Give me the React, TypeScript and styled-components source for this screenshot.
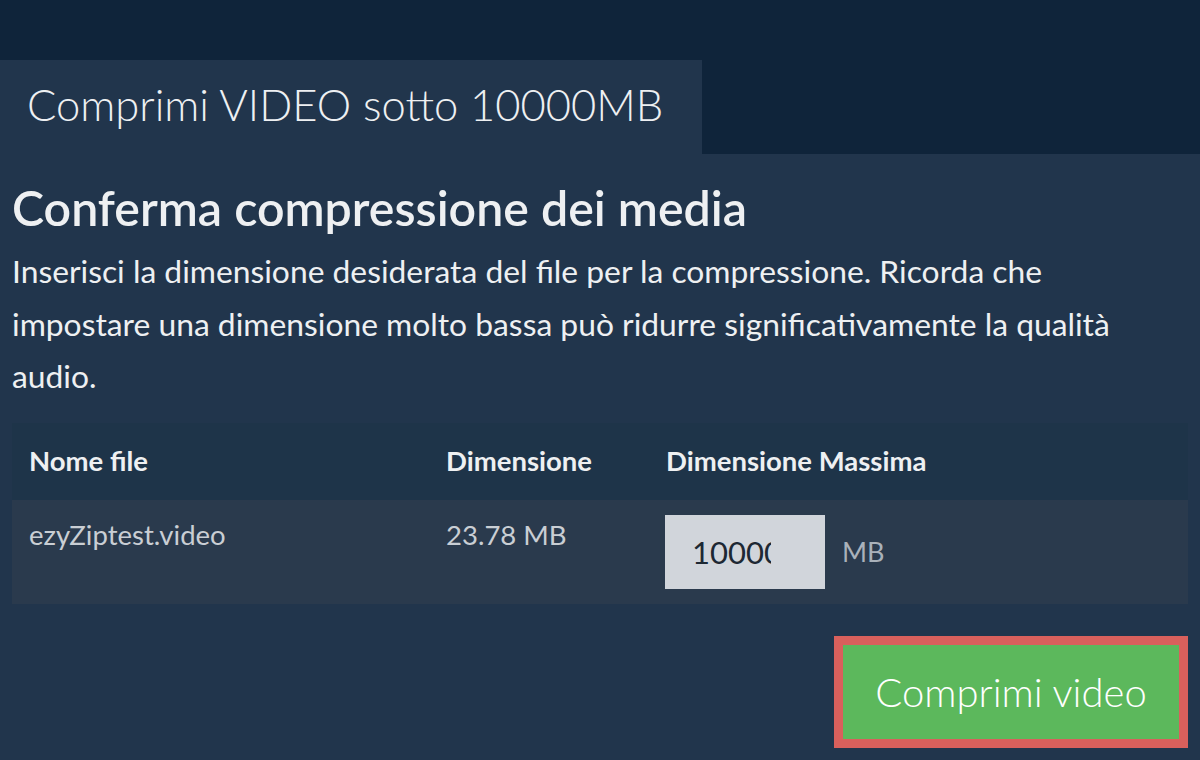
import React from "react";
import styled, { createGlobalStyle } from "styled-components";

const GlobalStyle = createGlobalStyle`
  html, body {
    margin: 0;
    padding: 0;
    background: #21354c;
    font-family: Lato, "Open Sans", sans-serif;
    color: #eef0f2;
  }
`;

const TopBar = styled.header`
  background: #0f243a;
  padding-top: 60px;
  display: flex;
`;

const Tab = styled.div`
  width: 702px;
  height: 94px;
  box-sizing: border-box;
  background: #21354c;
  padding-left: 27px;
  display: flex;
  align-items: center;
  padding-bottom: 6px;
  font-size: 43.5px;
  font-weight: 300;
  color: #eef0f2;
`;

const Content = styled.main`
  padding: 26px 12px 0;
`;

const Heading = styled.h2`
  margin: 0;
  font-size: 48.3px;
  line-height: 54px;
  font-weight: 600;
`;

const Intro = styled.p`
  margin: 11px 0 0;
  max-width: 1130px;
  font-size: 31.8px;
  line-height: 52.5px;
  color: #eef0f2;
`;

const Table = styled.div`
  margin-top: 20px;
  display: grid;
  grid-template-columns: 417px 220px 1fr;
`;

const HeadCell = styled.div`
  background: #1e3449;
  height: 75px;
  display: flex;
  align-items: center;
  padding: 0 17px 2px;
  font-size: 27.5px;
  font-weight: 700;
  color: #eef0f2;
`;

const Cell = styled.div<{ $center?: boolean }>`
  background: #2a3a4d;
  height: 104px;
  box-sizing: border-box;
  padding: ${(p) => (p.$center ? "0 16px" : "18px 17px 0")};
  display: flex;
  align-items: ${(p) => (p.$center ? "center" : "flex-start")};
  font-size: 27.5px;
  color: #c9ced4;
`;

const SizeInput = styled.input`
  width: 160px;
  height: 74px;
  box-sizing: border-box;
  border: none;
  outline: none;
  background: #d1d5db;
  padding: 0 54px 0 27px;
  font-family: Lato, sans-serif;
  font-size: 31px;
  color: #1d2833;
`;

const Unit = styled.span`
  margin-left: 17px;
  font-size: 27px;
  color: #a9b1ba;
`;

const Actions = styled.div`
  display: flex;
  justify-content: flex-end;
  margin-top: 32px;
`;

const CompressButton = styled.button`
  width: 354px;
  height: 112px;
  box-sizing: border-box;
  border: 9px solid #d9605c;
  background: #5cb85c;
  color: #ffffff;
  font-family: Lato, sans-serif;
  font-size: 40px;
  font-weight: 300;
  cursor: pointer;
`;

export default function App() {
  return (
    <>
      <GlobalStyle />
      <TopBar>
        <Tab>Comprimi VIDEO sotto 10000MB</Tab>
      </TopBar>
      <Content>
        <Heading>Conferma compressione dei media</Heading>
        <Intro>
          Inserisci la dimensione desiderata del file per la compressione. Ricorda che
          impostare una dimensione molto bassa può ridurre significativamente la qualità
          audio.
        </Intro>
        <Table>
          <HeadCell>Nome file</HeadCell>
          <HeadCell>Dimensione</HeadCell>
          <HeadCell>Dimensione Massima</HeadCell>
          <Cell>ezyZiptest.video</Cell>
          <Cell>23.78 MB</Cell>
          <Cell $center>
            <SizeInput type="text" defaultValue="10000" />
            <Unit>MB</Unit>
          </Cell>
        </Table>
        <Actions>
          <CompressButton>Comprimi video</CompressButton>
        </Actions>
      </Content>
    </>
  );
}
